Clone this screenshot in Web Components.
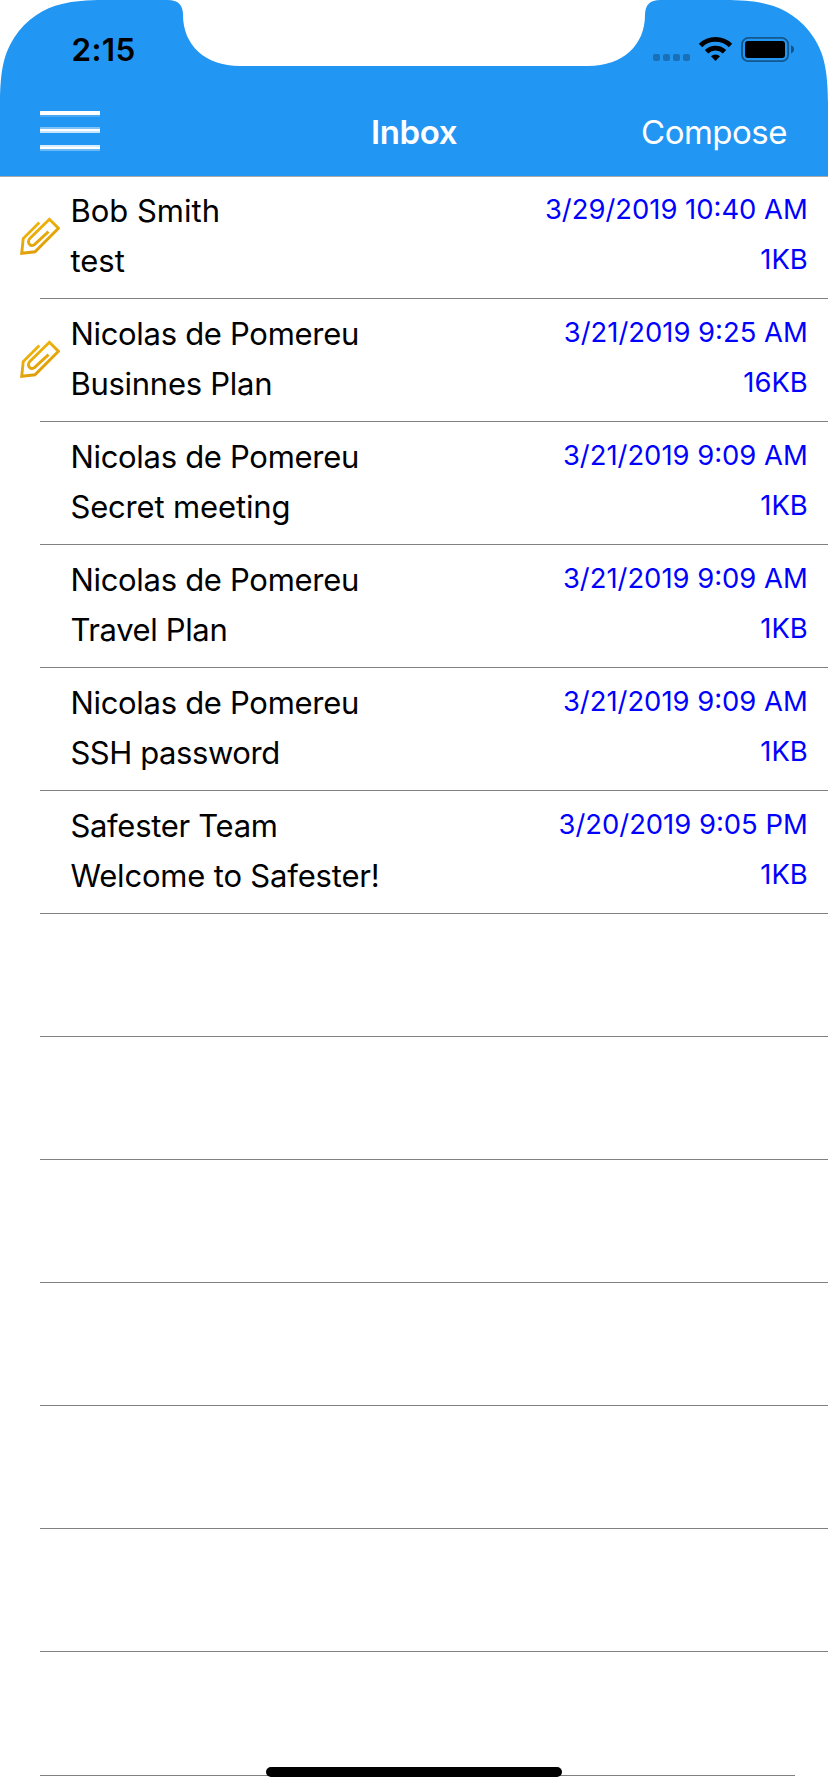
<!DOCTYPE html>
<html lang="en">
<head>
<meta charset="utf-8">
<title>Inbox</title>
<style>
html, body { margin: 0; background: #fff; }
body { font-family: Inter, "Liberation Sans", sans-serif; width: 828px; height: 1792px; overflow: hidden; }
</style>
</head>
<body>
<mail-app></mail-app>
<script>
const define = (name, html, setup) => {
  const tpl = document.createElement('template');
  tpl.innerHTML = html;
  customElements.define(name, class extends HTMLElement {
    constructor() {
      super();
      this.attachShadow({ mode: 'open' }).appendChild(tpl.content.cloneNode(true));
    }
    connectedCallback() { if (setup) setup(this, this.shadowRoot); }
  });
};

define('status-icons', `
<style>:host{display:block;width:142px;height:26px} svg{display:block}</style>
<svg width="142" height="26" viewBox="653 36 142 26">
  <g fill="#000" fill-opacity=".25">
    <rect x="653" y="54" width="7" height="7" rx="2"/><rect x="663" y="54" width="7" height="7" rx="2"/>
    <rect x="673" y="54" width="7" height="7" rx="2"/><rect x="683" y="54" width="7" height="7" rx="2"/>
  </g>
  <g fill="none" stroke="#000" stroke-width="4.8">
    <path d="M700.5 45.5A21.6 21.6 0 0 1 730.5 45.5"/>
    <path d="M706.5 51.7A12.9 12.9 0 0 1 724.5 51.7"/>
  </g>
  <path d="M715.5 61L711 56.3A6.5 6.5 0 0 1 720 56.3Z"/>
  <rect x="742" y="37.9" width="46.2" height="23.3" rx="6.5" fill="none" stroke="#000" stroke-opacity=".42" stroke-width="1.8"/>
  <rect x="745" y="41" width="40" height="17" rx="3"/>
  <path d="M791 45.2Q794 46.2 794 49.3Q794 52.4 791 53.4Z" fill-opacity=".45"/>
</svg>`);

define('phone-cutout', `
<style>:host{display:block;position:absolute;inset:0;pointer-events:none} svg{display:block}</style>
<svg width="828" height="110" viewBox="0 0 828 110" fill="#fff">
  <path d="M0 0V104C0 68 5 52 14 38C26 19 44 8 62 4C74 1 86 0 104 0Z"/>
  <path d="M828 0V104C828 68 823 52 814 38C802 19 784 8 766 4C754 1 742 0 724 0Z"/>
  <path d="M168 0C178 0 183 5 183 15C183 45 205 66 240 66H588C623 66 645 45 645 15C645 5 650 0 660 0Z"/>
</svg>`);

define('menu-button', `
<style>:host{display:block;width:60px;height:42px} svg{display:block}</style>
<svg width="60" height="42" viewBox="0 0 60 42" fill="#fff">
  <path d="M0 1H60V5H0Z"/><path d="M0 5H60V7H0Z" opacity=".18"/>
  <path d="M0 17H60V19H0Z" opacity=".42"/><path d="M0 19H60V21H0Z"/><path d="M0 21H60V23H0Z" opacity=".76"/>
  <path d="M0 35H60V37H0Z" opacity=".82"/><path d="M0 37H60V39H0Z"/><path d="M0 39H60V41H0Z" opacity=".33"/>
</svg>`);

define('app-header', `
<style>
:host{display:block;position:relative;height:176px;background:#2296f3;box-shadow:0 1px #a9a9a9;z-index:1}
.status{display:flex;justify-content:space-between;align-items:flex-start;height:88px;padding:0 33px 0 71.5px;box-sizing:border-box}
.time{font-size:31.5px;font-weight:600;line-height:50px;margin-top:25px;color:#000;letter-spacing:.3px}
status-icons{margin-top:36px}
.nav{display:grid;grid-template-columns:1fr auto 1fr;height:88px;padding:0 41px 0 40px;color:#fff;font-size:33px;line-height:50px;letter-spacing:-.5px}
menu-button{margin-top:22px}
.title{font-weight:600;margin-top:19px;padding-left:1px;letter-spacing:-.4px}
.action{justify-self:end;margin-top:19px}
</style>
<phone-cutout></phone-cutout>
<div class="status"><span class="time">2:15</span><status-icons></status-icons></div>
<div class="nav"><menu-button></menu-button><span class="title"><slot></slot></span><span class="action"><slot name="action"></slot></span></div>`);

define('paper-clip', `
<style>:host{display:block;width:40px;height:40px} svg{display:block}</style>
<svg width="40" height="40" viewBox="0 0 40 40" fill="none" stroke-width="2.9">
  <defs><linearGradient id="g" x1="0" y1="0" x2=".6" y2="1"><stop offset="0" stop-color="#f5bd10"/><stop offset="1" stop-color="#dc9a08"/></linearGradient></defs>
  <path stroke="url(#g)" d="M19.3 6.4L3.2 22.6L1.7 37.3L15 35.8L38.4 12.3L29.4 3.2L10 22.3C6.6 25.7 9.6 31.4 14.2 28.8L28.5 15.6"/>
</svg>`);

define('mail-row', `
<style>
:host{display:grid;grid-template-columns:40px 1fr auto;column-gap:10.4px;height:123px;box-sizing:border-box;padding:0 20.3px 0 20px;
 background:linear-gradient(#808080,#808080) 40px 100%/var(--rule,788px) 1px no-repeat}
:host([last]){height:124px;--rule:755px}
paper-clip{margin-top:40px;visibility:hidden}
:host([clip]) paper-clip{visibility:visible}
.main,.meta{line-height:50px;white-space:nowrap}
.main{font-size:31px;padding-top:10px;color:#000}
.meta{font-size:27.4px;padding-top:8px;color:#00f;text-align:right}
</style>
<paper-clip></paper-clip>
<div class="main"><div><slot name="from"></slot></div><div><slot name="subject"></slot></div></div>
<div class="meta"><div><slot name="date"></slot></div><div><slot name="size"></slot></div></div>`);

define('home-indicator', `
<style>:host{display:block;position:absolute;left:266px;top:1767px;width:296px;height:10px;border-radius:5px;background:#000}</style>`);

define('mail-app', `
<style>:host{display:block;position:relative;width:828px;height:1792px;background:#fff;overflow:hidden}</style>
<app-header>Inbox<span slot="action">Compose</span></app-header>
<main></main>
<home-indicator></home-indicator>`, (host, root) => {
  // from, subject, date, size, tracking of from and subject, attachment
  const mails = [
    ['Bob Smith', 'test', '3/29/2019 10:40 AM', '1KB', 0, 0, true],
    ['Nicolas de Pomereu', 'Businnes Plan', '3/21/2019 9:25 AM', '16KB', -.3, -.27, true],
    ['Nicolas de Pomereu', 'Secret meeting', '3/21/2019 9:09 AM', '1KB', -.3, -.15],
    ['Nicolas de Pomereu', 'Travel Plan', '3/21/2019 9:09 AM', '1KB', -.3, -.37],
    ['Nicolas de Pomereu', 'SSH password', '3/21/2019 9:09 AM', '1KB', -.3, -.43],
    ['Safester Team', 'Welcome to Safester!', '3/20/2019 9:05 PM', '1KB', -.3, -.18]
  ];
  const list = root.querySelector('main');
  for (let i = 0; i < 13; i++) {
    const row = document.createElement('mail-row');
    const m = mails[i];
    if (m) {
      ['from', 'subject', 'date', 'size'].forEach((slot, k) => {
        const s = document.createElement('span');
        s.slot = slot;
        s.textContent = m[k];
        if (k < 2) s.style.letterSpacing = m[4 + k] + 'px';
        row.append(s);
      });
      if (m[6]) row.setAttribute('clip', '');
    }
    if (i === 12) row.setAttribute('last', '');
    list.append(row);
  }
});
</script>
</body>
</html>
